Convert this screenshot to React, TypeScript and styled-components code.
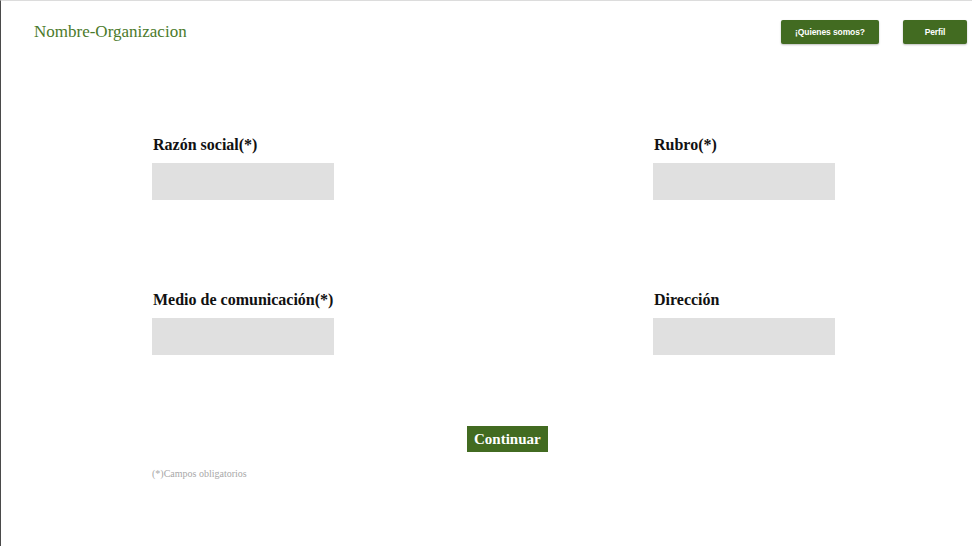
import styled, { createGlobalStyle } from "styled-components";

const GlobalStyle = createGlobalStyle`
  html, body {
    margin: 0;
    padding: 0;
    background: #ffffff;
  }
  body {
    font-family: "Liberation Serif", "DejaVu Serif", serif;
  }
`;

const green = "#426b21";

const Page = styled.div`
  box-sizing: border-box;
  width: 972px;
  height: 546px;
  border-top: 1px solid #dcdcdc;
  border-left: 1px solid #4a4a4a;
  display: flex;
  flex-direction: column;
`;

const Header = styled.header`
  display: flex;
  align-items: flex-start;
  justify-content: space-between;
  padding: 19px 5px 0 33px;
  height: 70px;
  box-sizing: border-box;
`;

const Brand = styled.div`
  color: #4b7a2b;
  font-size: 17px;
  line-height: 22px;
  margin-top: 1px;
`;

const Nav = styled.nav`
  display: flex;
  gap: 24px;
`;

const NavButton = styled.button<{ $width: number }>`
  width: ${({ $width }) => $width}px;
  height: 24px;
  background: ${green};
  color: #ffffff;
  border: none;
  border-radius: 2px;
  box-shadow: 0 1px 2px rgba(0, 0, 0, 0.25);
  font-family: "Liberation Sans", Arial, sans-serif;
  font-weight: 700;
  font-size: 8.5px;
  letter-spacing: -0.1px;
  cursor: pointer;
`;

const Form = styled.form`
  display: grid;
  grid-template-columns: 182px 182px;
  column-gap: 319px;
  row-gap: 90px;
  padding: 64px 0 0 151px;
`;

const Field = styled.label`
  display: flex;
  flex-direction: column;
  gap: 8px;
`;

const FieldLabel = styled.span`
  padding-left: 1px;
  color: #111111;
  font-weight: 700;
  font-size: 16px;
  line-height: 20px;
`;

const Input = styled.input`
  box-sizing: border-box;
  width: 182px;
  height: 37px;
  background: #e0e0e0;
  border: none;
  outline: none;
`;

const Actions = styled.div`
  display: flex;
  padding: 71px 0 0 466px;
`;

const SubmitButton = styled.button`
  height: 26px;
  padding: 0 7px;
  background: ${green};
  color: #ffffff;
  border: none;
  font-family: "Liberation Serif", serif;
  font-weight: 700;
  font-size: 15px;
  cursor: pointer;
`;

const Note = styled.p`
  margin: 0;
  padding: 16px 0 0 151px;
  color: #a8a8a8;
  font-size: 10px;
`;

const fields = [
  { label: "Razón social(*)" },
  { label: "Rubro(*)" },
  { label: "Medio de comunicación(*)" },
  { label: "Dirección" },
];

const App: React.FC = () => (
  <>
    <GlobalStyle />
    <Page>
      <Header>
        <Brand>Nombre-Organizacion</Brand>
        <Nav>
          <NavButton $width={98}>¡Quienes somos?</NavButton>
          <NavButton $width={64}>Perfil</NavButton>
        </Nav>
      </Header>
      <Form onSubmit={(e) => e.preventDefault()}>
        {fields.map((f) => (
          <Field key={f.label}>
            <FieldLabel>{f.label}</FieldLabel>
            <Input type="text" />
          </Field>
        ))}
      </Form>
      <Actions>
        <SubmitButton type="button">Continuar</SubmitButton>
      </Actions>
      <Note>(*)Campos obligatorios</Note>
    </Page>
  </>
);

export default App;
